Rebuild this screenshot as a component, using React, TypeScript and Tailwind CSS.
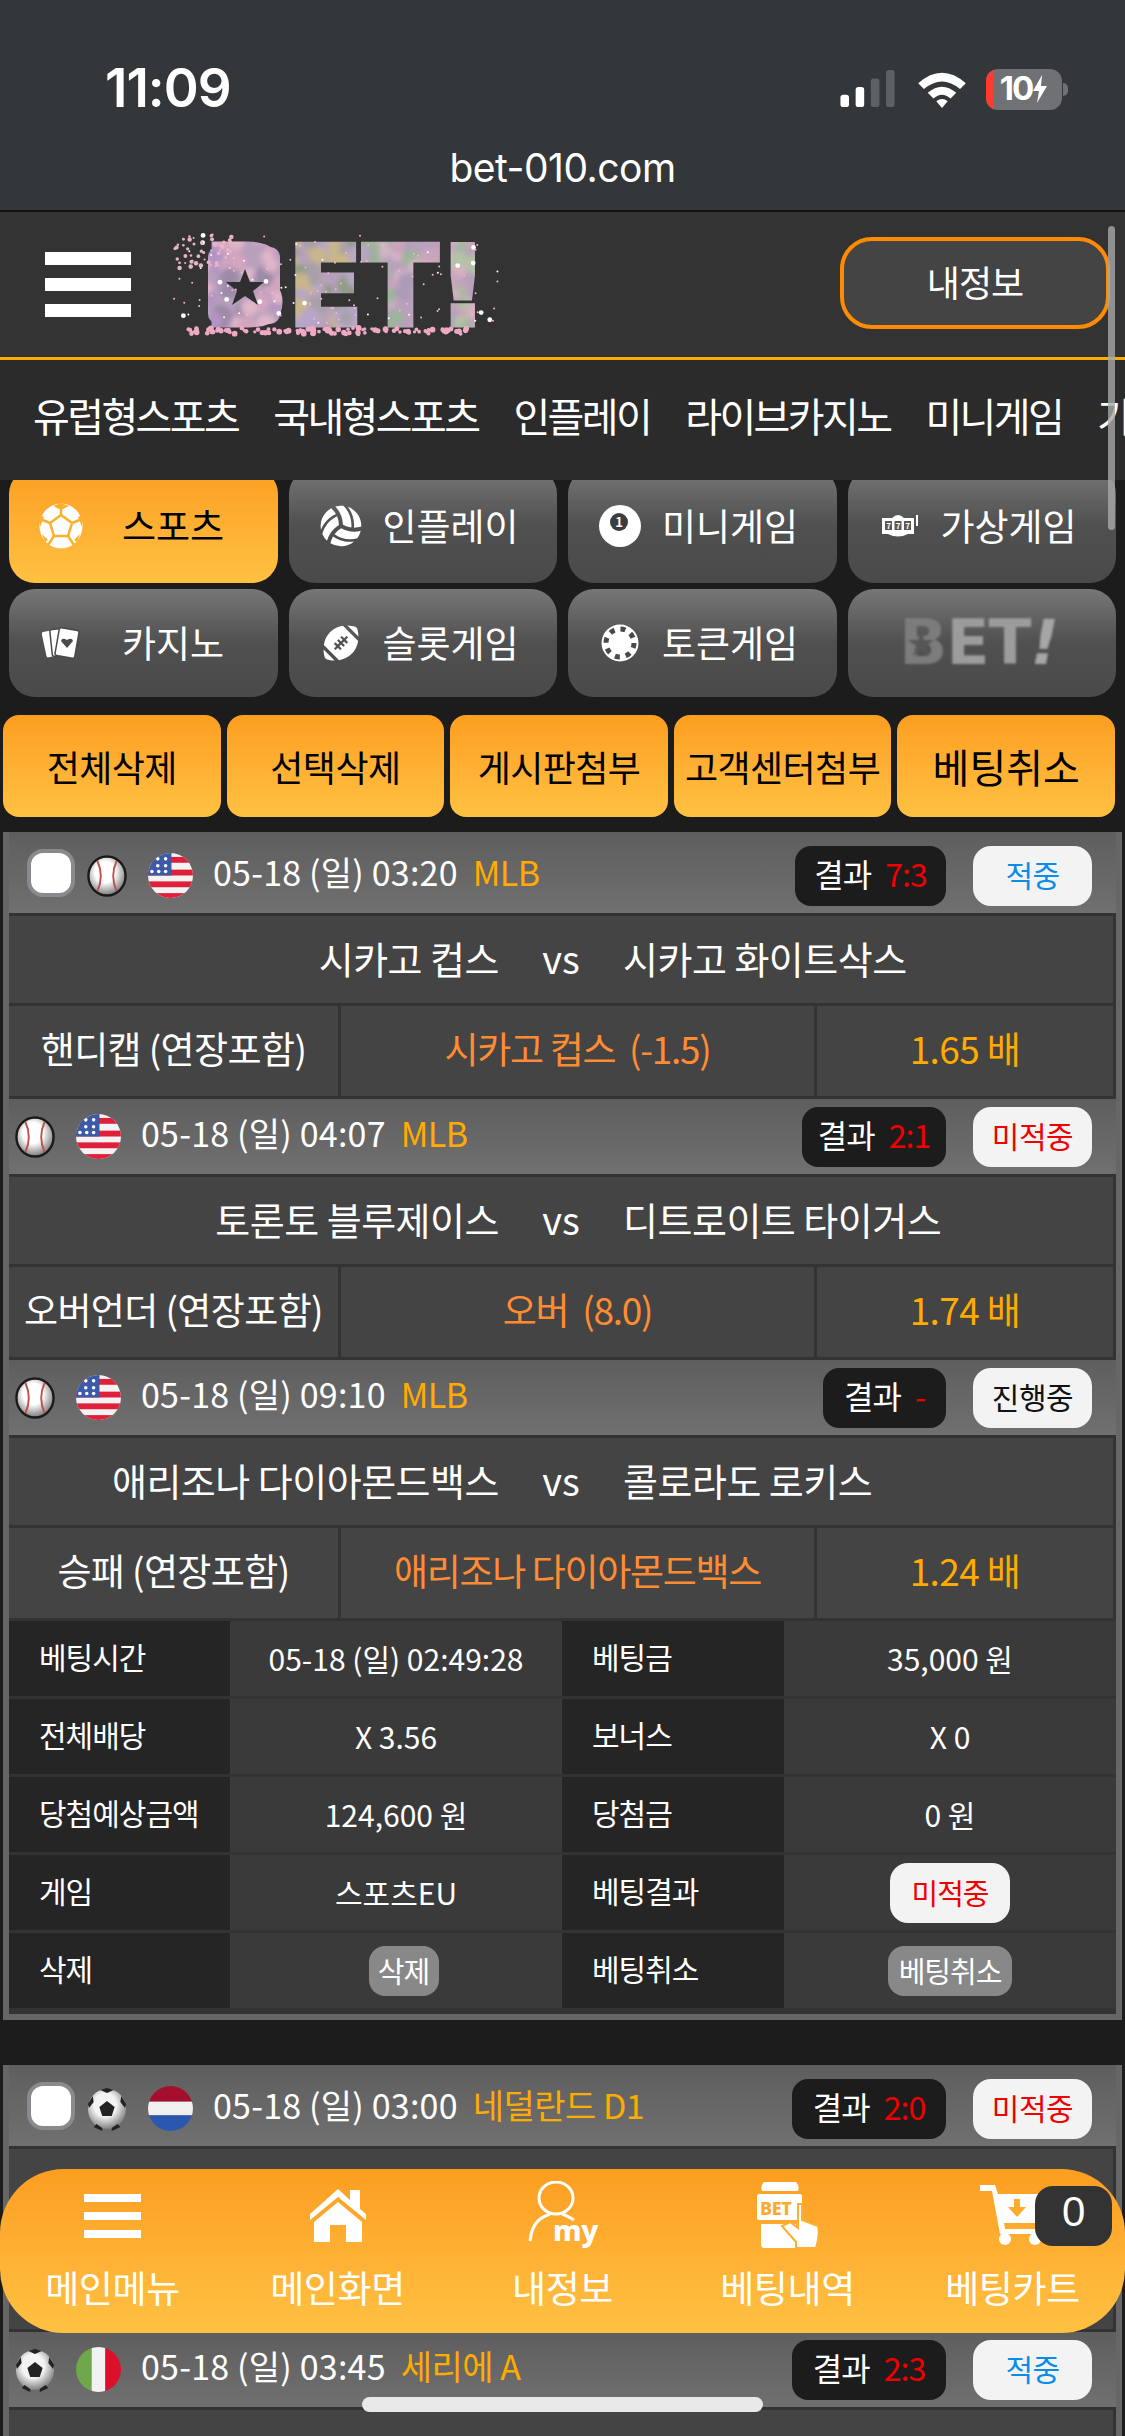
import { FaFootballBall, FaVolleyballBall } from "react-icons/fa";

const navItems = ["유럽형스포츠", "국내형스포츠", "인플레이", "라이브카지노", "미니게임", "가상게임"];
const actions = ["전체삭제", "선택삭제", "게시판첨부", "고객센터첨부"];

const rnd = (i: number) => {
  const v = Math.sin(i * 12.9898) * 43758.5453;
  return v - Math.floor(v);
};

// scattered petals around the logo, same every render
const petals = Array.from({ length: 120 }, (_, i) => ({
  x: 14 + rnd(i + 1) * 325,
  y: 8 + rnd(i + 300) * 92,
  r: i % 9 === 0 ? 2.4 : 1,
  c: i % 3 === 0 ? "#ffffff" : "#f2b6cc",
}));
const petalTop = Array.from({ length: 45 }, (_, i) => ({
  x: 14 + rnd(i + 2100) * 60,
  y: 9 + rnd(i + 2300) * 36,
  r: 1 + rnd(i + 2500) * 1.3,
}));
const petalBed = Array.from({ length: 110 }, (_, i) => ({
  x: 25 + rnd(i + 700) * 285,
  y: 103 + rnd(i + 900) * 6,
  r: 1.6 + rnd(i + 40) * 1.4,
}));
const texColors = (x: number, k: number) => {
  if (x < 128) return ["#d3a5c0", "#b394c4", "#e0b6c9", "#9c8aa8"][k];
  if (x < 205) return ["#a7a0a8", "#8f9c86", "#c9b68a", "#b7a6c8"][k];
  if (x < 292) return ["#c9a4bb", "#ab9bb9", "#d3b4c4", "#9cb59a"][k];
  return ["#9dbb9a", "#d8b0c0", "#b4c2a6", "#c9a4bb"][k];
};
const texBlobs = Array.from({ length: 240 }, (_, i) => {
  const x = 35 + rnd(i + 1200) * 300;
  return { x, y: 15 + rnd(i + 1500) * 90, r: 4 + rnd(i + 1800) * 7, c: texColors(x, i % 4) };
});

function BallIcon() {
  return (
    <svg width="40" height="42" viewBox="0 0 42 42" preserveAspectRatio="none" className="shrink-0">
      <defs>
        <radialGradient id="bb" cx="0.45" cy="0.4" r="0.6">
          <stop offset="0.45" stopColor="#ffffff" />
          <stop offset="1" stopColor="#7a7a7a" />
        </radialGradient>
      </defs>
      <circle cx="21" cy="21" r="19.5" fill="url(#bb)" stroke="#1a1a1a" strokeWidth="2.5" />
      <path d="M11 6 Q18 21 11 36 M31 6 Q24 21 31 36" stroke="#c0504d" strokeWidth="2" fill="none" />
    </svg>
  );
}

function SoccerIcon() {
  return (
    <svg width="40" height="46" viewBox="0 0 42 46" preserveAspectRatio="none" className="shrink-0">
      <defs>
        <radialGradient id="sb" cx="0.45" cy="0.4" r="0.65">
          <stop offset="0.45" stopColor="#f4f4f4" />
          <stop offset="1" stopColor="#707070" />
        </radialGradient>
      </defs>
      <circle cx="21" cy="23" r="20" fill="url(#sb)" />
      <path d="M21 15l8 6-3 9H16l-3-9z" fill="#222" />
      <path d="M14 4l7 3 7-3-7-2zM2 22l5-6-1-6-5 8zM40 22l-5-6 1-6 5 8zM10 38l6 4 0 3-9-4zM32 38l-6 4 0 3 9-4z" fill="#222" />
    </svg>
  );
}

function UsFlag() {
  return (
    <svg width="45" height="45" viewBox="0 0 46 46" className="shrink-0">
      <clipPath id="us"><circle cx="23" cy="23" r="23" /></clipPath>
      <g clipPath="url(#us)">
        <rect width="46" height="46" fill="#f3f3f3" />
        <rect y="4" width="46" height="6" fill="#e0203a" />
        <rect y="17" width="46" height="6" fill="#e0203a" />
        <rect y="29" width="46" height="6" fill="#e0203a" />
        <rect y="41" width="46" height="6" fill="#e0203a" />
        <rect width="24" height="23" fill="#3c5aa6" />
        <circle cx="10" cy="6" r="1.8" fill="#fff" />
        <circle cx="18" cy="6" r="1.8" fill="#fff" />
        <circle cx="10" cy="13" r="1.8" fill="#fff" />
        <circle cx="18" cy="13" r="1.8" fill="#fff" />
        <circle cx="4" cy="19" r="1.8" fill="#fff" />
        <circle cx="11" cy="19" r="1.8" fill="#fff" />
        <circle cx="18" cy="19" r="1.8" fill="#fff" />
      </g>
    </svg>
  );
}

function NlFlag() {
  return (
    <svg width="45" height="45" viewBox="0 0 46 46" className="shrink-0">
      <clipPath id="nl"><circle cx="23" cy="23" r="23" /></clipPath>
      <g clipPath="url(#nl)">
        <rect width="46" height="16" fill="#a50f2d" />
        <rect y="16" width="46" height="14" fill="#f0f0f0" />
        <rect y="30" width="46" height="16" fill="#2a58b0" />
      </g>
    </svg>
  );
}

function ItFlag() {
  return (
    <svg width="45" height="45" viewBox="0 0 46 46" className="shrink-0">
      <clipPath id="it"><circle cx="23" cy="23" r="23" /></clipPath>
      <g clipPath="url(#it)">
        <rect width="16" height="46" fill="#6fa84a" />
        <rect x="16" width="14" height="46" fill="#f2f2f2" />
        <rect x="30" width="16" height="46" fill="#dc0f2d" />
      </g>
    </svg>
  );
}

function GameHeader({
  check,
  sport,
  flag,
  date,
  league,
  score,
  scoreWidth,
  status,
  first,
}: {
  check?: boolean;
  sport: "base" | "soccer";
  flag: "us" | "nl" | "it";
  date: string;
  league: string;
  score: string;
  scoreWidth: string;
  status: "적중" | "미적중" | "진행중";
  first?: boolean;
}) {
  const statusColor = status === "적중" ? "text-[#0a8ce8]" : status === "미적중" ? "text-[#f00000]" : "text-[#111]";
  return (
    <div
      className={`flex items-center pr-[24px] bg-gradient-to-b from-[#5e5e5e] to-[#707070] ${first ? "h-[81px] pt-[6px]" : "h-[75px]"} ${check ? "pl-[18px]" : "pl-[6px]"}`}
    >
      {check && <div className="w-[48px] h-[48px] mb-[6px] rounded-[16px] bg-white border-[4px] border-[#8a8a8e] mr-[12px] shrink-0" />}
      {sport === "base" ? <BallIcon /> : <SoccerIcon />}
      <div className="w-[21px] shrink-0" />
      {flag === "us" ? <UsFlag /> : flag === "nl" ? <NlFlag /> : <ItFlag />}
      <span className="ml-[20px] pb-[8px] text-[34px] tracking-[0.2px] text-white whitespace-nowrap">{date}</span>
      <span className="ml-[15px] pb-[8px] text-[34px] tracking-[-0.5px] text-[#ffab00] whitespace-nowrap">{league}</span>
      <div className={`ml-auto h-[60px] rounded-[16px] bg-[#1c1c1c] flex items-center justify-center gap-[14px] pb-[6px] text-[32px] tracking-[-1px] whitespace-nowrap ${scoreWidth}`}>
        <span className="text-white">결과</span>
        <span className="text-[#f00000]">{score}</span>
      </div>
      <div className={`ml-[27px] w-[119px] h-[60px] rounded-[18px] bg-[#f3f3f3] flex items-center justify-center pb-[2px] text-[30px] tracking-[-0.5px] shrink-0 ${statusColor}`}>
        {status}
      </div>
    </div>
  );
}

function TeamRow({ home, away }: { home?: string; away?: string }) {
  return (
    <div className="mt-[3px] mr-[3px] h-[87px] pb-[4px] bg-[#444] flex items-center text-[38px] text-white whitespace-nowrap">
      <div className="flex-1 text-right tracking-[-0.5px]">{home}</div>
      <div className="w-[124px] text-center">{home ? "vs" : ""}</div>
      <div className="flex-1 tracking-[-0.5px]">{away}</div>
    </div>
  );
}

function BetRow({ type, pick, odds }: { type?: string; pick?: string; odds?: string }) {
  return (
    <div className="mt-[3px] mr-[3px] h-[90px] flex gap-[3px] text-[37px] whitespace-nowrap tracking-[-0.6px]">
      <div className="w-[329px] pb-[4px] bg-[#444] flex items-center justify-center text-white">{type}</div>
      <div className="w-[473px] pb-[4px] bg-[#444] flex items-center justify-center text-[#ff8c33] whitespace-pre tracking-[-1.3px]">{pick}</div>
      <div className="flex-1 pb-[4px] bg-[#444] flex items-center justify-center text-[#ffab00]">{odds}</div>
    </div>
  );
}

function InfoRow({ l1, v1, l2, v2 }: { l1: string; v1: React.ReactNode; l2: string; v2: React.ReactNode }) {
  return (
    <div className="mt-[3px] h-[75px] flex text-[30px] text-white whitespace-nowrap">
      <div className="w-[221px] pb-[4px] bg-[#252525] flex items-center pl-[30px] tracking-[-1px]">{l1}</div>
      <div className="w-[332px] bg-[#3a3a3a] flex items-center justify-center">{v1}</div>
      <div className="w-[222px] pb-[4px] bg-[#252525] flex items-center pl-[30px] tracking-[-1px]">{l2}</div>
      <div className="flex-1 bg-[#3a3a3a] flex items-center justify-center">{v2}</div>
    </div>
  );
}

function Logo() {
  return (
    <svg width="350" height="140" viewBox="0 -10 350 140" className="ml-[29px] shrink-0">
      <defs>
        <filter id="soft">
          <feGaussianBlur stdDeviation="2.5" />
        </filter>
        <pattern id="tex" patternUnits="userSpaceOnUse" x="0" y="0" width="350" height="120">
          <rect width="350" height="120" fill="#b8a0bc" />
          <g filter="url(#soft)">
            {texBlobs.map((b, i) => (
              <circle key={i} cx={b.x} cy={b.y} r={b.r} fill={b.c} />
            ))}
          </g>
        </pattern>
      </defs>
      <rect x="48" y="22" width="72" height="77" rx="10" fill="url(#tex)" />
      <text
        x="44"
        y="100"
        textLength="284"
        lengthAdjust="spacingAndGlyphs"
        fontFamily="'DejaVu Sans', sans-serif"
        fontWeight="700"
        fontSize="110"
        fill="url(#tex)"
        stroke="url(#tex)"
        strokeWidth="5"
      >
        BET!
      </text>
      <polygon points="85,44 90,57 104,57 93,66 98,80 85,71 72,80 77,66 66,57 80,57" fill="#2f2f2f" />
      {petals.map((p, i) => (
        <circle key={i} cx={p.x} cy={p.y} r={p.r} fill={p.c} />
      ))}
      {petalTop.map((p, i) => (
        <circle key={i} cx={p.x} cy={p.y} r={p.r} fill="#e9b3c9" />
      ))}
      {petalBed.map((p, i) => (
        <circle key={i} cx={p.x} cy={p.y} r={p.r} fill="#efa9c4" />
      ))}
    </svg>
  );
}

function GameButton({ icon, label, active, textClass }: { icon: React.ReactNode; label: string; active?: boolean; textClass: string }) {
  return (
    <div
      className={`flex items-center pl-[20px] rounded-[26px] text-[37px] whitespace-nowrap ${active ? "bg-gradient-to-b from-[#fc9e20] to-[#ffc142] text-black" : "bg-gradient-to-b from-[#777] via-[#505050] to-[#4a4a4a] text-white"}`}
    >
      <div className="w-[64px] flex items-center justify-center shrink-0">{icon}</div>
      <span className={textClass}>{label}</span>
    </div>
  );
}

function App() {
  return (
    <div className="relative w-[1125px] h-[2436px] overflow-hidden bg-[#1c1c1c] font-['Noto_Sans_CJK_KR','Noto_Sans',sans-serif]">
      {/* status bar + url */}
      <div className="relative z-10 h-[212px] bg-[#33373a] border-b-[2px] border-[#111] flex flex-col">
        <div className="flex items-center h-[116px] pt-[62px] pl-[105px] pr-[57px]">
          <span className="font-['Inter',sans-serif] font-semibold text-[53px] tracking-[-1px] text-white">11:09</span>
          <div className="ml-auto flex items-center">
            <svg width="58" height="38" viewBox="0 0 58 40">
              <rect x="0" y="26" width="9" height="13" rx="3" fill="#fff" />
              <rect x="16" y="18" width="9" height="21" rx="3" fill="#fff" />
              <rect x="32" y="9" width="9" height="30" rx="3" fill="#5e6164" />
              <rect x="48" y="0" width="9" height="39" rx="3" fill="#5e6164" />
            </svg>
            <svg width="52" height="38" viewBox="0 0 52 40" className="ml-[19px]">
              <path d="M1 14 Q26 -8 51 14 L45 20 Q26 4 7 20 Z" fill="#fff" />
              <path d="M11 24 Q26 11 41 24 L35 30 Q26 22 17 30 Z" fill="#fff" />
              <path d="M20 33 Q26 28 32 33 L26 40 Z" fill="#fff" />
            </svg>
            <div className="relative ml-[18px] w-[76px] h-[41px] rounded-[12px] bg-[#6f7174] overflow-hidden flex items-center justify-center">
              <div className="absolute left-0 top-0 bottom-0 w-[8px] bg-[#ff3b30]" />
              <span className="relative font-['Inter',sans-serif] font-bold text-[33px] tracking-[-2px] text-white">10</span>
              <svg width="16" height="28" viewBox="0 0 16 28" className="relative">
                <path d="M10 0 L1 16 H7 L5 28 L15 11 H9 Z" fill="#fff" />
              </svg>
            </div>
            <div className="ml-[1px] w-[5px] h-[13px] rounded-r-full bg-[#6f7174]" />
          </div>
        </div>
        <div className="mt-[30px] text-center font-['Inter',sans-serif] text-[39px] tracking-[-0.5px] text-white leading-[44px]">bet-010.com</div>
      </div>

      {/* logo header */}
      <div className="relative z-10 h-[148px] bg-[#333] border-b-[3px] border-[#ffab00] flex items-center">
        <div className="ml-[45px] w-[86px] flex flex-col gap-[13px] shrink-0">
          <div className="h-[13px] bg-white" />
          <div className="h-[13px] bg-white" />
          <div className="h-[13px] bg-white" />
        </div>
        <Logo />
        <div className="ml-auto mr-[15px] mb-[3px] w-[270px] h-[92px] rounded-[32px] border-[4px] border-[#ff8c00] bg-[#444] flex items-center justify-center pb-[4px] text-[36px] tracking-[-1px] text-white">
          내정보
        </div>
      </div>

      {/* top nav */}
      <div className="relative z-10 h-[120px] bg-[#2b2b2b] flex items-center gap-[35px] pl-[33px] pb-[10px] overflow-hidden text-[40px] tracking-[-2.6px] text-white whitespace-nowrap">
        {navItems.map((item) => (
          <span key={item}>{item}</span>
        ))}
      </div>

      {/* game buttons */}
      <div className="-mt-[12px] grid grid-cols-4 grid-rows-[115px_108px] gap-x-[11px] gap-y-[6px] px-[9px]">
        <GameButton
          active
          label="스포츠"
          textClass="ml-[29px]"
          icon={
            <svg width="44" height="46" viewBox="0 0 44 46">
              <ellipse cx="22" cy="23" rx="21.5" ry="22.5" fill="#fff" />
              <g stroke="#fdaf2e" strokeWidth="2.5" fill="none">
                <path d="M22 12 L33 20 L29 33 H15 L11 20 Z" />
                <path d="M22 12 V2 M33 20 L43 16 M29 33 L35 42 M15 33 L9 42 M11 20 L1 16" />
              </g>
              <path d="M14 3 L22 7 L30 3 L22 0 Z M1 24 L5 14 L1 12 Z M43 24 L39 14 L43 12 Z M9 37 L3 31 L6 39 Z M35 37 L41 31 L38 39 Z" fill="#fdaf2e" />
            </svg>
          }
        />
        <GameButton label="인플레이" textClass="ml-[10px]" icon={<FaVolleyballBall size={42} color="#fff" />} />
        <GameButton
          label="미니게임"
          textClass="ml-[10px]"
          icon={
            <svg width="44" height="44" viewBox="0 0 44 44">
              <circle cx="22" cy="22" r="21" fill="#fff" />
              <circle cx="21" cy="18" r="9" fill="#3d3d3d" />
              <text x="21" y="23" textAnchor="middle" fontSize="13" fontWeight="700" fill="#fff">1</text>
            </svg>
          }
        />
        <GameButton
          label="가상게임"
          textClass="ml-[9px]"
          icon={
            <svg width="40" height="28" viewBox="0 0 40 28">
              <path d="M2 6 H34 V22 H28 Q18 27 8 22 H2 Z M12 6 Q18 0 24 6" fill="#fff" />
              <rect x="5" y="9" width="7" height="9" fill="#5a5a5a" />
              <rect x="14.5" y="9" width="7" height="9" fill="#5a5a5a" />
              <rect x="24" y="9" width="7" height="9" fill="#5a5a5a" />
              <text x="8.5" y="16.5" textAnchor="middle" fontSize="8" fontWeight="700" fill="#fff">7</text>
              <text x="18" y="16.5" textAnchor="middle" fontSize="8" fontWeight="700" fill="#fff">7</text>
              <text x="27.5" y="16.5" textAnchor="middle" fontSize="8" fontWeight="700" fill="#fff">7</text>
              <path d="M37 3 V14" stroke="#fff" strokeWidth="2" />
            </svg>
          }
        />
        <GameButton
          label="카지노"
          textClass="ml-[29px]"
          icon={
            <svg width="38" height="34" viewBox="0 0 38 34">
              <rect x="2" y="5" width="10" height="26" rx="2" fill="#fff" transform="rotate(-12 7 18)" />
              <rect x="9" y="3" width="12" height="27" rx="2" fill="#fff" stroke="#4a4a4a" strokeWidth="1.5" transform="rotate(-6 15 16)" />
              <rect x="15" y="3" width="20" height="28" rx="2" fill="#fff" stroke="#4a4a4a" strokeWidth="1.5" transform="rotate(10 25 17)" />
              <path d="M25 22 L19 15 Q20 11 25 14 Q30 11 31 15 Z" fill="#4a4a4a" />
            </svg>
          }
        />
        <GameButton label="슬롯게임" textClass="ml-[10px]" icon={<FaFootballBall size={36} color="#fff" />} />
        <GameButton
          label="토큰게임"
          textClass="ml-[10px]"
          icon={
            <svg width="38" height="38" viewBox="0 0 38 38">
              <circle cx="19" cy="19" r="18.5" fill="#fff" />
              <circle cx="19" cy="19" r="14" fill="none" stroke="#4a4a4a" strokeWidth="5" strokeDasharray="5 6" />
              <circle cx="19" cy="19" r="9.5" fill="#fff" />
            </svg>
          }
        />
        <div className="flex items-center justify-center pr-[6px] pb-[2px] rounded-[26px] bg-gradient-to-b from-[#777] via-[#505050] to-[#4a4a4a]">
          <span className="relative font-['DejaVu_Sans',sans-serif] font-bold text-[63px] leading-none tracking-[-1px] blur-[1px]">
            <span className="text-[#7c7c7c]">B</span>
            <span className="text-[#9c9c9c]">ET</span>
            <span className="italic text-[#a6a6a6]">!</span>
            <svg width="26" height="26" viewBox="0 0 26 26" className="absolute left-[9px] top-[20px]">
              <polygon points="13,0 16,9 26,9 18,15 21,25 13,19 5,25 8,15 0,9 10,9" fill="#575757" />
            </svg>
          </span>
        </div>
      </div>

      {/* action buttons */}
      <div className="mt-[18px] grid grid-cols-5 gap-[6px] pl-[3px] pr-[10px] text-black whitespace-nowrap">
        {actions.map((a) => (
          <div key={a} className="h-[102px] rounded-[16px] bg-gradient-to-b from-[#fc9e20] to-[#ffc142] flex items-center justify-center text-[36px] tracking-[-0.6px]">
            {a}
          </div>
        ))}
        <div className="h-[102px] rounded-[16px] bg-gradient-to-b from-[#fc9e20] to-[#ffc142] flex items-center justify-center text-[40px]">베팅취소</div>
      </div>

      {/* bet slip 1 */}
      <div className="mt-[15px] mx-[3px] pb-[6px] bg-[#333] border-x-[6px] border-b-[6px] border-[#666]">
        <GameHeader first check sport="base" flag="us" date="05-18 (일) 03:20" league="MLB" score="7:3" scoreWidth="w-[151px]" status="적중" />
        <TeamRow home="시카고 컵스" away="시카고 화이트삭스" />
        <BetRow type="핸디캡 (연장포함)" pick="시카고 컵스  (-1.5)" odds="1.65 배" />
        <div className="mt-[3px]" />
        <GameHeader sport="base" flag="us" date="05-18 (일) 04:07" league="MLB" score="2:1" scoreWidth="w-[144px]" status="미적중" />
        <TeamRow home="토론토 블루제이스" away="디트로이트 타이거스" />
        <BetRow type="오버언더 (연장포함)" pick="오버  (8.0)" odds="1.74 배" />
        <div className="mt-[3px]" />
        <GameHeader sport="base" flag="us" date="05-18 (일) 09:10" league="MLB" score="-" scoreWidth="w-[123px]" status="진행중" />
        <TeamRow home="애리조나 다이아몬드백스" away="콜로라도 로키스" />
        <BetRow type="승패 (연장포함)" pick="애리조나 다이아몬드백스" odds="1.24 배" />
        <InfoRow l1="베팅시간" v1="05-18 (일) 02:49:28" l2="베팅금" v2="35,000 원" />
        <InfoRow l1="전체배당" v1="X 3.56" l2="보너스" v2="X 0" />
        <InfoRow l1="당첨예상금액" v1="124,600 원" l2="당첨금" v2="0 원" />
        <InfoRow
          l1="게임"
          v1="스포츠EU"
          l2="베팅결과"
          v2={<span className="w-[120px] h-[60px] rounded-[18px] bg-[#f3f3f3] flex items-center justify-center text-[29px] tracking-[-1px] text-[#f00000]">미적중</span>}
        />
        <InfoRow
          l1="삭제"
          v1={<span className="ml-[15px] w-[70px] h-[50px] rounded-[16px] bg-[#888] flex items-center justify-center text-[29px] tracking-[-1px]">삭제</span>}
          l2="베팅취소"
          v2={<span className="w-[124px] h-[50px] rounded-[16px] bg-[#888] flex items-center justify-center text-[29px] tracking-[-1px]">베팅취소</span>}
        />
      </div>

      {/* bet slip 2, runs under the bottom bar */}
      <div className="mt-[45px] mx-[3px] bg-[#333] border-x-[6px] border-[#666]">
        <GameHeader first check sport="soccer" flag="nl" date="05-18 (일) 03:00" league="네덜란드 D1" score="2:0" scoreWidth="w-[154px]" status="미적중" />
        <TeamRow />
        <BetRow />
        <div className="mt-[3px]" />
        <GameHeader sport="soccer" flag="it" date="05-18 (일) 03:45" league="세리에 A" score="2:3" scoreWidth="w-[154px]" status="적중" />
        <TeamRow home="볼로냐 칼초" away="인터 밀란 FC" />
      </div>

      {/* bottom bar */}
      <div className="absolute left-0 right-0 top-[2169px] h-[164px] rounded-[64px] bg-gradient-to-b from-[#fc9e20] to-[#ffc142] grid grid-cols-5 text-white text-[37px] tracking-[-0.4px] whitespace-nowrap">
        <div className="flex flex-col items-center">
          <div className="h-[96px] flex flex-col justify-center gap-[10px] w-[57px] pb-[2px]">
            <div className="h-[8px] bg-white" />
            <div className="h-[8px] bg-white" />
            <div className="h-[8px] bg-white" />
          </div>
          <span className="leading-[44px]">메인메뉴</span>
        </div>
        <div className="flex flex-col items-center">
          <div className="h-[96px] flex items-center pb-[4px]">
            <svg width="56" height="53" viewBox="0 0 56 53">
              <path d="M0 25 L28 0 L40 11 V1 H50 V20 L56 25 V31 L28 8 L0 31 Z" fill="#fff" />
              <path d="M4 33 L28 13 L52 33 V53 H36 V36 H20 V53 H4 Z" fill="#fff" />
            </svg>
          </div>
          <span className="leading-[44px]">메인화면</span>
        </div>
        <div className="flex flex-col items-center">
          <div className="h-[96px] flex items-center pb-[4px]">
            <svg width="70" height="68" viewBox="0 0 70 68">
              <ellipse cx="28" cy="17" rx="17" ry="16" fill="none" stroke="#fff" strokeWidth="3" />
              <path d="M2 60 C4 40 14 36 22 33 M34 33 Q40 35 46 39" fill="none" stroke="#fff" strokeWidth="3" />
              <text x="25" y="60" fontFamily="'Noto Sans', sans-serif" fontWeight="800" fontSize="29" fill="#fff">my</text>
            </svg>
          </div>
          <span className="leading-[44px]">내정보</span>
        </div>
        <div className="flex flex-col items-center">
          <div className="h-[96px] flex items-center pb-[4px]">
            <svg width="64" height="66" viewBox="0 0 64 66">
              <path d="M8 0 H40 Q44 4 42 9 H6 Q4 4 8 0 Z" fill="#fff" />
              <rect x="1" y="12" width="45" height="26" rx="2" fill="#fff" />
              <text x="4" y="33" fontFamily="'Noto Sans', sans-serif" fontWeight="800" fontSize="18" fill="#fdaa2a">BET</text>
              <path d="M5 42 H40 V66 H8 Q5 66 5 62 Z" fill="#fff" />
              <path d="M26 44 L40 60 V66 H60 Q64 54 62 44 L46 38 V22 H42 V46 L34 40 Z" fill="#fff" stroke="#fdb030" strokeWidth="2" />
            </svg>
          </div>
          <span className="leading-[44px]">베팅내역</span>
        </div>
        <div className="relative flex flex-col items-center">
          <div className="h-[96px] flex items-center pb-[4px]">
            <svg width="66" height="60" viewBox="0 0 66 60">
              <path d="M0 0 H15 L18 9 H66 V38 H24 L25 44 H62 V49 H20 L12 6 H0 Z" fill="#fff" />
              <circle cx="25" cy="54" r="6" fill="#fff" />
              <circle cx="55" cy="54" r="6" fill="#fff" />
              <path d="M34 14 H40 V22 H46 L37 32 L28 22 H34 Z" fill="#fdac2c" />
            </svg>
          </div>
          <span className="leading-[44px]">베팅카트</span>
          <div className="absolute left-[135px] top-[17px] w-[77px] h-[60px] rounded-[18px] bg-[#333] flex items-center justify-center pb-[10px] text-[42px] font-['Liberation_Sans',sans-serif]">
            0
          </div>
        </div>
      </div>

      {/* scroll thumb + home indicator */}
      <div className="absolute z-20 left-[1108px] top-[226px] w-[7px] h-[304px] rounded-full bg-[#a8a8a8]/80" />
      <div className="absolute left-[362px] top-[2397px] w-[401px] h-[15px] rounded-full bg-[#e9e9e9]" />
    </div>
  );
}

export default App;
